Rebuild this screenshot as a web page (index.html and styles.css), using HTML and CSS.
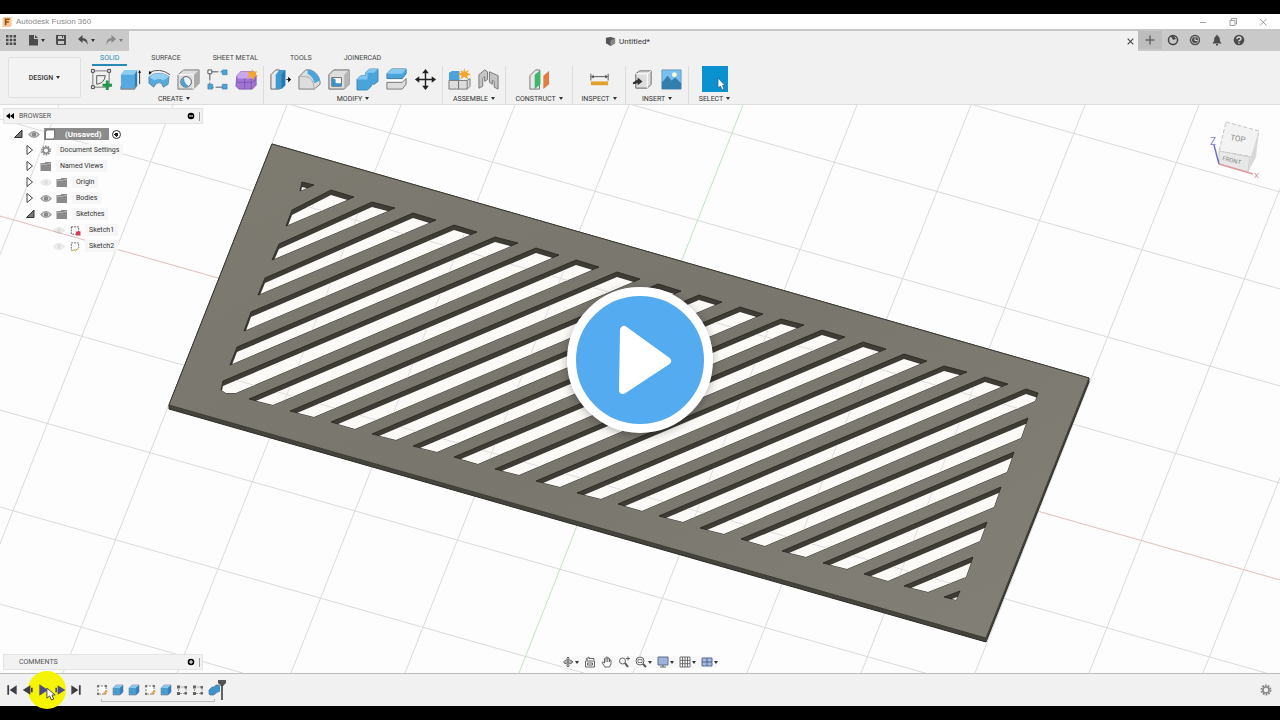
FILE: index.html
```html
<!DOCTYPE html>
<html lang="en">
<head>
<meta charset="utf-8">
<title>Autodesk Fusion 360</title>
<link rel="stylesheet" href="styles.css">
</head>
<body>
<svg class="sprite" aria-hidden="true">
  <defs>
    <symbol id="eye" viewBox="0 0 12 10"><path d="M1 5Q6-1 11 5Q6 11 1 5Z" fill="#ddd" stroke="#999" stroke-width="1.2"/><circle cx="6" cy="5" r="2.2" fill="#888"/></symbol>
    <symbol id="folder" viewBox="0 0 12 10"><path d="M.5 9.500V1.500H4.500L5.500 .5H11V9.500Z" fill="#8b8b8b"/><path d="M.5 3H7L8 2H11" fill="none" stroke="#c4c4c4" stroke-width=".7"/></symbol>
    <symbol id="closed" viewBox="0 0 10 10"><path d="M2 .5V9.500L7.500 5Z" fill="#fff" stroke="#444"/></symbol>
    <symbol id="open" viewBox="0 0 10 10"><path d="M9 1V8.500H1.500Z" fill="#777" stroke="#333"/></symbol>
    <symbol id="gear" viewBox="0 0 12 12"><circle cx="6" cy="6" r="4.500" fill="none" stroke="#888" stroke-width="2" stroke-dasharray="1.700 1.100"/><circle cx="6" cy="6" r="3" fill="none" stroke="#888" stroke-width="1.600"/></symbol>
    <symbol id="tsketch" viewBox="0 0 12 12"><path d="M2 2H10V10H2Z" fill="#fff" stroke="#666" stroke-width=".8" stroke-dasharray="2 1"/><path d="M1 1h2v2h-2zM9 1h2v2h-2zM1 9h2v2h-2z" fill="#777"/><path d="M7.500 10.500L11 6.500" stroke="#eda445" stroke-width="2"/></symbol>
    <symbol id="textrude" viewBox="0 0 12 12"><path d="M1 4L4 1H11V8L8 11H1Z" fill="#4a9ad4" stroke="#838d95" stroke-width=".7"/><path d="M1 4L4 1H11L8 4Z" fill="#8bc7ef"/><path d="M8 4L11 1V8L8 11Z" fill="#3a82b6"/></symbol>
    <symbol id="tpattern" viewBox="0 0 12 12"><path d="M2.500 3H10V9.500H2.500Z" fill="none" stroke="#777" stroke-width=".7" stroke-dasharray="2 1"/><path d="M1 1.500h3v3h-3zM8.500 2h2.500v2.500h-2.500zM1 8h3v3h-3zM8.500 8h2.500v2.500h-2.500z" fill="#666"/></symbol>
  </defs>
</svg>
<div class="app">
  <header class="titlebar">
    <svg class="logo" viewBox="0 0 10 11"><path d="M0 1L2 0H10V10L8 11H0Z" fill="#f6c89a"/><path d="M3.500 9V2.500H8M3.500 5.500H7" fill="none" stroke="#994c12" stroke-width="1.800"/></svg>
    <span class="app-name">Autodesk Fusion 360</span>
    <div class="window-buttons">
      <button aria-label="Minimize"><svg viewBox="0 0 10 10"><path d="M2 5.500H8"/></svg></button>
      <button aria-label="Restore"><svg viewBox="0 0 10 10"><path d="M2 3.500H7V8.500H2ZM3.500 3V1.500H8.500V7H7.500"/></svg></button>
      <button aria-label="Close window"><svg viewBox="0 0 10 10"><path d="M2 2L8.500 8.500M8.500 2L2 8.500"/></svg></button>
    </div>
  </header>

  <div class="tabstrip">
    <div class="quick">
      <button aria-label="Data panel"><svg viewBox="0 0 12 12"><path d="M1 1h2.500v2.500H1zM4.700 1h2.500v2.500H4.700zM8.400 1H11v2.500H8.400zM1 4.700h2.500v2.500H1zM4.700 4.700h2.500v2.500H4.700zM8.400 4.700H11v2.500H8.400zM1 8.400h2.500V11H1zM4.700 8.400h2.500V11H4.700zM8.400 8.400H11V11H8.400z"/></svg></button>
      <button aria-label="File"><svg viewBox="0 0 12 12"><path d="M2 1H7V5H11V11.500H2ZM8 1L11 4H8Z"/></svg><i class="caret"></i></button>
      <button aria-label="Save"><svg viewBox="0 0 12 12"><path fill-rule="evenodd" d="M1 1H11V11H2L1 10ZM3 2V5H9V2ZM3 7V10H9V7ZM7 2H8V4H7Z"/></svg></button>
      <button aria-label="Undo"><svg viewBox="0 0 12 12"><path d="M1 5L5.500 1V4Q11 4 10.500 11Q9 6.500 5.500 6.500V9Z"/></svg><i class="caret"></i></button>
      <button class="faded" aria-label="Redo"><svg viewBox="0 0 12 12"><path d="M11 5L6.500 1V4Q1 4 1.500 11Q3 6.500 6.500 6.500V9Z"/></svg><i class="caret"></i></button>
    </div>
    <div class="doc-tab">
      <span class="doc-name"><svg viewBox="0 0 12 12"><path d="M1 2L6 1L11 2.500V8L6 11L1 8Z" fill="#555"/><path d="M6 5L11 2.500V8L6 11Z" fill="#888"/></svg>Untitled*</span>
      <button class="close-doc" aria-label="Close document"><svg viewBox="0 0 8 8"><path d="M1.500 1.500L6.500 6.500M6.500 1.500L1.500 6.500"/></svg></button>
    </div>
    <div class="tools-right">
      <button class="plus" aria-label="New design"><svg viewBox="0 0 12 12"><path d="M6 1.500V10.500M1.500 6H10.500" stroke="#666" stroke-width="1.500"/></svg></button>
      <button aria-label="Extensions"><svg viewBox="0 0 12 12"><circle cx="6" cy="6" r="4.500" fill="none" stroke="#444" stroke-width="1.500"/><path d="M3 2H7L9 5L6 6L5 4Z"/></svg></button>
      <button aria-label="Job status"><svg viewBox="0 0 12 12"><circle cx="6" cy="6" r="5.200"/><circle cx="6" cy="6" r="3.600" fill="none" stroke="#ccc" stroke-width=".8"/><path d="M6 3.500V6.500H8.500" fill="none" stroke="#ddd"/></svg></button>
      <button aria-label="Notifications"><svg viewBox="0 0 12 12"><path d="M6 .5L7 2Q9 3 9 7L10.500 9.500H1.500L3 7Q3 3 5 2ZM5 10H7V11.500H5Z"/></svg></button>
      <button aria-label="Help"><svg viewBox="0 0 12 12"><circle cx="6" cy="6" r="5.300"/><path d="M4 5Q4 3 6 3T8 5Q8 6 6 6.700V7.500M6 8.500V9.700" fill="none" stroke="#ddd" stroke-width="1.300"/></svg></button>
    </div>
  </div>

  <div class="ribbon">
    <button class="workspace">DESIGN<i class="caret"></i></button>
    <div class="ribbon-main">
      <nav class="ribbon-tabs">
        <a href="#solid" class="active">SOLID</a><a href="#surface">SURFACE</a><a href="#sheet">SHEET METAL</a><a href="#tools">TOOLS</a><a href="#joinercad">JOINERCAD</a>
      </nav>
      <div class="groups">
        <section class="group">
          <div class="icons">
            <button aria-label="Create sketch"><svg viewBox="0 0 24 24"><path d="M3 3H20V20H3Z" fill="none" stroke="#555" stroke-width=".8"/><path d="M1.500 1.500h3v3h-3zM18.500 1.500h3v3h-3zM1.500 18.500h3v3h-3z" fill="#eee" stroke="#444"/><path d="M7 17V8H16Q15 16 7 17Z" fill="none" stroke="#555"/><path d="M18 13V23M13 18H23" stroke="#23974c" stroke-width="3"/></svg></button>
            <button aria-label="Extrude"><svg viewBox="0 0 24 24"><path d="M2 7L6 2H19L16 6V22H2Z" fill="#55a9de"/><path d="M2 7L6 2H19L16 7Z" fill="#8dccf1"/><path d="M16 7L19 2V18L16 22Z" fill="#2d7eb6"/><path d="M2 19V22H16L19 18" fill="none" stroke="#888" stroke-width="1.200"/><path d="M21.500 17V4" stroke="#333"/><path d="M20 5L21.500 2L23 5Z"/></svg></button>
            <button aria-label="Revolve"><svg viewBox="0 0 24 24"><path d="M1 9Q11 2 22 9L21 17L16 20L14 16Q11 14 8 17L6 20L1 16Z" fill="#55a9de" stroke="#5a7c92" stroke-width=".8"/><path d="M1 9Q11 2 22 9L16 13Q11 10 7 13Z" fill="#93cff2"/><path d="M1 5Q12-1 23 7" fill="none" stroke="#555"/><path d="M1 3V7L4 5Z"/></svg></button>
            <button aria-label="Hole"><svg viewBox="0 0 24 24"><path d="M1 7L7 2H23V16L17 22H1Z" fill="#ddd" stroke="#777"/><path d="M17 8L23 2V16L17 22Z" fill="#aaa"/><path d="M1 7H17V22" fill="none" stroke="#fff"/><circle cx="9.500" cy="14.500" r="5.500" fill="#eef8ff" stroke="#555"/><path d="M5 12A5.500 5.500 0 0 0 13 19Q8 18 7 10Z" fill="#4b9fd6"/></svg></button>
            <button aria-label="Rectangular pattern"><svg viewBox="0 0 24 24"><path d="M4 4H20M4 4V20H20" fill="none" stroke="#555" stroke-dasharray="9 2"/><path d="M2 2h4v4H2z" fill="#fff" stroke="#555"/><path d="M17 2h5v5h-5zM2 17h5v5H2zM17 17h5v5h-5z" fill="#47a4dc" stroke="#417fa7" stroke-width=".7"/></svg></button>
            <button aria-label="Create form"><svg viewBox="0 0 24 24"><path d="M2 8L6 4H20L22 8V18L18 22H4L1 19Z" fill="#a174d2" stroke="#8358b4"/><path d="M2 8L6 4H20L21 7L17 11H3Z" fill="#c8a8eb"/><path d="M10 11V22M17 11V22M2 15H18L22 12" fill="none" stroke="#7c53ab" stroke-width=".8"/><path d="M18 1L19.200 4.500L23 3L21.500 6.500L24 8L20.500 9L19 12.500L17 9.500L13 10L15 7L13 4L16.500 4.500Z" fill="#f3a72f"/></svg></button>
          </div><button class="group-label">CREATE<i class="caret"></i></button>
        </section>
        <section class="group">
          <div class="icons">
            <button aria-label="Press pull"><svg viewBox="0 0 24 24"><path d="M2 7L7 2H11V22H2Z" fill="#e8e8e8" stroke="#666"/><path d="M7 7L11 2H17V18L13 22H7Z" fill="#3e99d3"/><path d="M13 7L17 2V18L13 22Z" fill="#2878ad"/><path d="M18 12H22" stroke="#333"/><path d="M20 9L23 12L20 15Z"/></svg></button>
            <button aria-label="Fillet"><svg viewBox="0 0 24 24"><path d="M1 9L8 2H13Q21 5 23 14V17L17 22H1Z" fill="#ddd" stroke="#777"/><path d="M10 2H13Q21 5 23 13L17 16Q16 9 10 6Z" fill="#4ba5dd"/><path d="M1 9H8Q16 9 17 22" fill="none" stroke="#aaa"/></svg></button>
            <button aria-label="Shell"><svg viewBox="0 0 24 24"><path d="M2 7L7 2H23V17L18 22H2Z" fill="#ddd" stroke="#666"/><path d="M18 7L23 2V17L18 22Z" fill="#b5b5b5"/><path d="M5 10H15V19H5Z" fill="#fff" stroke="#666"/><path d="M5 10L9 12V16H15V19H5Z" fill="#3a92c9"/></svg></button>
            <button aria-label="Combine"><svg viewBox="0 0 24 24"><path d="M1 12L5 8H10V5L14 1H23V14L19 17H16V19L12 23H1Z" fill="#4aa4dc" stroke="#397da9" stroke-width=".8"/><path d="M1 12L5 8H10V5L14 1H23L19 5H12V12Z" fill="#82c6ef"/></svg></button>
            <button aria-label="Split body"><svg viewBox="0 0 24 24"><path d="M2 6L7 1H22V6L18 11H2Z" fill="#4ba5dd" stroke="#407d9f"/><path d="M2 6L7 1H22L18 6Z" fill="#86c9f0"/><path d="M2 15H18L22 11V17L18 22H2Z" fill="#ddd" stroke="#777"/><path d="M2 13H18L22 9" fill="none" stroke="#fff"/></svg></button>
            <button aria-label="Move"><svg viewBox="0 0 24 24"><path d="M12 3V21M3 12H21" stroke="#222" stroke-width="1.500"/><path d="M12 1L15.500 5.500H8.500ZM12 23L8.500 18.500H15.500ZM1 12L5.500 8.500V15.500ZM23 12L18.500 8.500V15.500Z" fill="#222"/></svg></button>
          </div><button class="group-label">MODIFY<i class="caret"></i></button>
        </section>
        <section class="group">
          <div class="icons">
            <button aria-label="New component"><svg viewBox="0 0 24 24"><path d="M1 5L4 3H12V13H1Z" fill="#4aa3da"/><path d="M1 13H11V22H1ZM11 13H20V22H11ZM20 13L23 11V19L20 22" fill="#ddd" stroke="#777"/><path d="M17 0L18 4L22 2L20 5L24 7L20 8L21 12L17 9L13 12L14 8L10 6L14 5L13 2L16 4Z" fill="#f2a72c"/></svg></button>
            <button aria-label="Joint"><svg viewBox="0 0 24 24"><path d="M2 7L8 2L11 4V12L8 14V9L6 11V19L2 21ZM13 4L22 8V22L18 20V14L16 13V17L13 15Z" fill="#c4c4c4" stroke="#777"/></svg></button>
          </div><button class="group-label">ASSEMBLE<i class="caret"></i></button>
        </section>
        <section class="group construct">
          <div class="icons"><button aria-label="Construction plane"><svg viewBox="0 0 24 24"><path d="M2 8L8 2H12V22H2Z" fill="#e8e8e8" stroke="#777"/><path d="M7 7L13 2V17L7 22Z" fill="#3db76c"/><path d="M16 8L22 3V17L16 22Z" fill="#e37b42"/></svg></button></div>
          <button class="group-label">CONSTRUCT<i class="caret"></i></button>
        </section>
        <section class="group inspect">
          <div class="icons"><button aria-label="Measure"><svg viewBox="0 0 24 24"><path d="M3 6V13M21 6V13M4 9H20" stroke="#555"/><path d="M3 9L6 7V11ZM21 9L18 7V11Z" fill="#555"/><path d="M3 14H21V18H3Z" fill="#e2a12d"/></svg></button></div>
          <button class="group-label">INSPECT<i class="caret"></i></button>
        </section>
        <section class="group">
          <div class="icons">
            <button aria-label="Insert derive"><svg viewBox="0 0 24 24"><path d="M5 6L9 3H21V17L17 21H5Z" fill="#ddd" stroke="#666"/><path d="M5 6H17V21M17 6L21 3" fill="none" stroke="#fff"/><path d="M2 15L7 12V10L12 14L7 18V16L2 17Z" fill="#333"/></svg></button>
            <button aria-label="Insert image"><svg viewBox="0 0 24 24"><path d="M2 2H22V22H2Z" fill="#77bff0" stroke="#719cb5"/><path d="M2 15L8 8L12 13L16 10L22 16V22H2Z" fill="#347eae"/><circle cx="15" cy="7" r="2.500" fill="#ffffd8"/></svg></button>
          </div><button class="group-label">INSERT<i class="caret"></i></button>
        </section>
        <section class="group select">
          <div class="icons"><button class="selected" aria-label="Select"><svg viewBox="0 0 26 26"><path d="M16 12V22L18.500 20L20 24L22 23L20.500 19.500H23Z" fill="#fff" stroke="#25607f" stroke-width=".7"/></svg></button></div>
          <button class="group-label">SELECT<i class="caret"></i></button>
        </section>
      </div>
    </div>
  </div>

  <main class="viewport">
    <svg class="scene" viewBox="0 105 1280 568" preserveAspectRatio="xMidYMid slice">
      <defs>
        <path id="slots" d="M302 182L314 185L300 191ZM331 190L354 197L286 226L292 210ZM372 202L395 208L272 260L279 244ZM413 213L436 220L258 295L265 278ZM454 225L477 232L244 331L251 312ZM495 237L518 243L230 365L237 347ZM536 248L559 255L236 393L226 393L221 390L223 381ZM576 260L599 267L273 405L249 399ZM617 272L640 279L314 417L290 411ZM658 284L681 291L355 429L331 422ZM699 295L722 302L396 440L372 434ZM740 307L763 314L437 452L413 446ZM781 319L804 325L478 464L454 457ZM822 330L845 337L519 475L495 469ZM863 342L886 349L560 487L536 481ZM904 354L927 361L601 499L577 493ZM944 366L967 372L642 511L618 504ZM985 377L1008 384L683 522L659 516ZM1026 389L1038 393L1035 401L724 534L700 528ZM1028 418L1021 438L765 546L741 539ZM1014 452L1007 472L806 557L782 551ZM1001 487L994 507L847 569L823 563ZM987 522L980 541L888 581L864 574ZM973 557L966 577L928 592L904 586ZM960 591L956 600L944 597Z"/>
        <clipPath id="slot-clip"><use href="#slots"/></clipPath>
        <clipPath id="floor-clip"><use href="#slots" y="5"/></clipPath>
        <path id="shallow" d="M0 -172L1280 192M0 -75L1280 289M0 22L1280 386M0 119L1280 483M0 313L1280 677M0 410L1280 774M0 507L1280 871M0 604L1280 968"/>
        <path id="steep" d="M59 105L-165 673M173 105L-51 673M287 105L63 673M401 105L177 673M515 105L291 673M629 105L405 673M857 105L633 673M971 105L747 673M1085 105L861 673M1199 105L975 673M1313 105L1089 673M1427 105L1203 673"/>
        <linearGradient id="metal" x1="0" y1="0" x2="1" y2="1"><stop offset="0" stop-color="#7e7b71"/><stop offset=".5" stop-color="#78766d"/><stop offset="1" stop-color="#838077"/></linearGradient>
      </defs>
      <path d="M0 105H1280V673H0Z" fill="#fdfdfd"/>
      <g fill="none">
        <use href="#shallow" stroke="#dadada"/><use href="#steep" stroke="#dadada"/>
        <path d="M0 216L1280 580" stroke="#e0bfb9"/><path d="M743 105L519 673" stroke="#bce8bf"/>
      </g>
      <path d="M272 144L1089 378V382L986 642L169 409V405Z" fill="#45443c" stroke="#2b2a25"/>
      <path d="M272 144L1089 378L986 638L169 405Z" fill="url(#metal)" stroke="#37362f" stroke-width=".8"/>
      <use href="#slots" fill="#3e3c34" stroke="#25241f" stroke-width=".8"/>
      <g clip-path="url(#slot-clip)"><g clip-path="url(#floor-clip)">
        <path d="M200 150H1060V620H200Z" fill="#fbfaf7"/>
        <use href="#shallow" stroke="#dedede"/><use href="#steep" stroke="#dedede"/>
      </g></g>
      <path d="M1226 122L1259 131L1253 157L1219 151Z" fill="#f3f3f3" stroke="#c4c4c4" stroke-dasharray="4 2"/>
      <path d="M1219 151L1250 157L1248 172L1219 164Z" fill="#e8e8e8" stroke="#ccc"/>
      <path d="M1259 131L1256 157L1248 172L1251 156Z" fill="#d8d8d8"/>
      <path d="M1214 145L1219 164" stroke="#7070d2" stroke-width="1.500"/><path d="M1219 164L1253 174" stroke="#dd9c9c" stroke-width="1.500"/>
      <text class="cube-top" x="1230" y="140" transform="rotate(10 1230 140)">TOP</text>
      <text class="cube-front" x="1222" y="160" transform="rotate(14 1222 160)">FRONT</text>
      <text class="axis-z" x="1210" y="145">Z</text><text class="axis-x" x="1254" y="178">X</text>
    </svg>

    <aside class="browser">
      <div class="panel-head"><button aria-label="Collapse browser"><svg viewBox="0 0 8 8"><path d="M4 1V7L0 4ZM8 1V7L4 4Z"/></svg></button><h2>BROWSER</h2><button aria-label="Hide browser"><svg viewBox="0 0 8 8"><circle cx="4" cy="4" r="3.300"/><path d="M2 4H6" stroke="#fff"/></svg></button><span class="grip"></span></div>
      <ul class="tree">
        <li class="root"><svg class="arrow"><use href="#open"/></svg><svg class="ico"><use href="#eye"/></svg><span class="root-name"><svg class="ico" viewBox="0 0 12 12"><path d="M1 3L3 1H11V9L9 11H1Z" fill="#fff" stroke="#666"/></svg>(Unsaved)</span><input type="radio" checked aria-label="Activate component"></li>
        <li class="l1"><svg class="arrow"><use href="#closed"/></svg><svg class="ico"><use href="#gear"/></svg><span>Document Settings</span></li>
        <li class="l1"><svg class="arrow"><use href="#closed"/></svg><svg class="ico"><use href="#folder"/></svg><span>Named Views</span></li>
        <li class="l1"><svg class="arrow"><use href="#closed"/></svg><svg class="ico dim"><use href="#eye"/></svg><svg class="ico"><use href="#folder"/></svg><span>Origin</span></li>
        <li class="l1"><svg class="arrow"><use href="#closed"/></svg><svg class="ico"><use href="#eye"/></svg><svg class="ico"><use href="#folder"/></svg><span>Bodies</span></li>
        <li class="l1"><svg class="arrow"><use href="#open"/></svg><svg class="ico"><use href="#eye"/></svg><svg class="ico"><use href="#folder"/></svg><span>Sketches</span></li>
        <li class="l2"><svg class="ico dim"><use href="#eye"/></svg><svg class="ico" viewBox="0 0 12 12"><path d="M2 2H10V10H2Z" fill="#fff" stroke="#555" stroke-dasharray="2 1"/><path d="M7 7H12V11.500H7Z" fill="#d63b57"/></svg><span>Sketch1</span></li>
        <li class="l2"><svg class="ico dim"><use href="#eye"/></svg><svg class="ico" viewBox="0 0 12 12"><path d="M2 2H10V7L7 10H2Z" fill="#fff" stroke="#666" stroke-dasharray="2 1"/><path d="M2 10.500H7L10.500 7" fill="none" stroke="#d9ba52"/></svg><span>Sketch2</span></li>
      </ul>
    </aside>

    <div class="bottom">
      <div class="panel-head comments"><h2>COMMENTS</h2><button aria-label="Show comments"><svg viewBox="0 0 8 8"><circle cx="4" cy="4" r="3.300"/><path d="M2 4H6M4 2V6" stroke="#fff"/></svg></button><span class="grip"></span></div>
      <div class="navbar">
        <button aria-label="Orbit"><svg viewBox="0 0 12 12"><path d="M6 1V11M1 6H11M4.500 2.500L6 1L7.500 2.500M4.500 9.500L6 11L7.500 9.500M2.500 4.500Q6 3 9.500 4.500Q12 6 9 7.500Q5 9 2 7"/></svg><i class="caret"></i></button>
        <button aria-label="Look at"><svg viewBox="0 0 12 12"><path d="M1.500 5H10.500V11H1.500ZM3.500 7H8.500V9H3.500ZM2 3L5 1V2.500H10V4M2 3L4 4"/></svg></button>
        <button aria-label="Pan"><svg viewBox="0 0 12 12"><path d="M4 11L1 6.500Q1.500 5 3.500 7V2.500Q4.500 1 5 2.500V1.500Q6 0 6.800 1.500V2.500Q8 1 8.500 3V4Q10 3 10 5V8L8.500 11ZM5 2.500V6M6.800 2V6M8.500 3V6" fill="#fff"/></svg></button>
        <button aria-label="Zoom"><svg viewBox="0 0 12 12"><circle cx="4.500" cy="5" r="3"/><path d="M7 7L10 11" stroke-width="2"/><path d="M8 2.500H12M10 .5V4.500"/></svg></button>
        <button aria-label="Fit"><svg viewBox="0 0 12 12"><circle cx="5" cy="5" r="4"/><path d="M3 3.500H7V6.500H3Z" stroke-width=".7"/><path d="M8 8L11 11" stroke-width="2"/></svg><i class="caret"></i></button>
        <button aria-label="Display settings"><svg viewBox="0 0 12 12"><path d="M1 1H11V9H1Z" fill="#9eb4df" stroke="#56647e"/><path d="M3 11H9M6 9V11"/></svg><i class="caret"></i></button>
        <button aria-label="Grid"><svg viewBox="0 0 12 12"><path d="M1 1H11V11H1ZM3.500 1V11M6 1V11M8.500 1V11M1 4.300H11M1 7.700H11" stroke-width=".8"/></svg><i class="caret"></i></button>
        <button aria-label="Viewports"><svg viewBox="0 0 12 12"><path d="M1 2H11V10H1ZM1 6H11M6 2V10" fill="#a9bbdf" stroke="#4a5f8a"/></svg><i class="caret"></i></button>
      </div>
    </div>
  </main>

  <footer class="timeline">
    <span class="highlight"></span>
    <div class="playback">
      <button aria-label="Go to start"><svg viewBox="0 0 12 12"><path d="M2 2H3.500V10H2ZM10 2V10L4 6Z"/></svg></button>
      <button aria-label="Step back"><svg viewBox="0 0 12 12"><path d="M8 2V10L1.500 6ZM8.500 4H10V8H8.500Z"/></svg></button>
      <button class="lit" aria-label="Play timeline"><svg viewBox="0 0 12 12"><path d="M2 1V11L9.500 6Z"/></svg></button>
      <button class="lit" aria-label="Step forward"><svg viewBox="0 0 12 12"><path d="M4 2V10L10.500 6ZM2 4H3.500V8H2Z"/></svg></button>
      <button aria-label="Go to end"><svg viewBox="0 0 12 12"><path d="M8.500 2H10V10H8.500ZM2 2V10L8 6Z"/></svg></button>
    </div>
    <svg class="pointer" viewBox="0 0 12 16"><path d="M1 1V12L4 9.500L6 14L8.500 13L6.500 8.500H10Z" fill="#fff" stroke="#444"/></svg>
    <div class="features">
      <button aria-label="Sketch 1"><svg><use href="#tsketch"/></svg></button><button aria-label="Extrude 1"><svg><use href="#textrude"/></svg></button><button aria-label="Extrude 2"><svg><use href="#textrude"/></svg></button><button aria-label="Sketch 2"><svg><use href="#tsketch"/></svg></button><button aria-label="Extrude 3"><svg><use href="#textrude"/></svg></button><button aria-label="Pattern 1"><svg><use href="#tpattern"/></svg></button><button aria-label="Pattern 2"><svg><use href="#tpattern"/></svg></button><button aria-label="Combine 1"><svg viewBox="0 0 12 12"><path d="M1 6L4 3H6L8 1H11L12 3V7L8 9L6 11H2L1 10Z" fill="#3d94d1" stroke="#51799a" stroke-width=".7"/></svg></button>
    </div>
    <svg class="marker" viewBox="0 0 10 22"><path d="M1 1H9V4L6 7H4L1 4Z" fill="#555"/><path d="M5 6V21" stroke="#333" stroke-width="1.500"/></svg>
    <button class="settings" aria-label="Timeline settings"><svg><use href="#gear"/></svg></button>
  </footer>
  <button class="play" aria-label="Play video"><svg viewBox="0 0 146 146"><circle cx="73" cy="73" r="68.500" fill="#54abef" stroke="#fff" stroke-width="9"/><path d="M57 43L56 103L100 74Z" fill="#fff" stroke="#fff" stroke-width="8" stroke-linejoin="round"/></svg></button>
</div>
</body>
</html>
```
FILE: styles.css
```css
* { box-sizing: border-box; }
body { margin: 0; background: #000; color: #333; font-family: Roboto, "Liberation Sans", sans-serif; font-size: 8px; }
button { display: flex; align-items: center; justify-content: center; padding: 0; border: 0; background: none; color: inherit; font: inherit; }
h2, ul { margin: 0; padding: 0; font-weight: 400; }
svg { display: block; flex: none; }
.sprite { position: absolute; width: 0; height: 0; }
.caret { border: 2px solid transparent; border-top: 3px solid #333; border-bottom: 0; margin-left: 3px; }

.app { position: relative; display: flex; flex-direction: column; height: 100vh; padding: 14px 0; overflow: hidden; }
.titlebar { display: flex; align-items: center; flex: none; height: 15px; padding: 0 2px; background: #fff; color: #8a8a8a; }
.logo { width: 10px; height: 10px; }
.app-name { margin-left: 4px; font-family: "Liberation Sans", Arial, sans-serif; }
.window-buttons { display: flex; gap: 20px; margin-left: auto; padding-right: 10px; }
.window-buttons svg { width: 10px; height: 10px; fill: none; stroke: #888; stroke-width: .8; }

.tabstrip { display: flex; flex: none; height: 22px; border-top: 2px solid #c6c6c6; background: #f1f1f1; }
.quick, .tools-right { display: flex; align-items: center; padding-bottom: 2px; background: #c9c9c9; }
.quick { width: 129px; padding-left: 5px; padding-right: 6px; justify-content: space-between; }
.quick svg, .tools-right svg { width: 12px; height: 12px; fill: #4c4c4c; }
.quick .caret { margin-left: 2px; }
.faded { opacity: .5; }
.doc-tab { display: flex; flex: 1; align-items: center; padding-right: 3px; }
.doc-name { display: flex; align-items: center; gap: 3px; margin: 0 auto; }
.doc-name svg { width: 11px; height: 11px; }
.close-doc svg { width: 9px; height: 9px; stroke: #444; }
.tools-right { width: 142px; gap: 10px; }
.plus { width: 24px; height: 18px; margin-right: -5px; background: #bdbdbd; }

.ribbon { display: flex; flex: none; height: 54px; padding-left: 8px; background: #f1f1f1; border-bottom: 1px solid #ddd; }
.workspace { width: 73px; height: 41px; margin-top: 6px; border: 1px solid #e0e0e0; border-radius: 2px; background: #f3f3f3; font-size: 7px; font-weight: 500; }
.ribbon-main { padding-left: 4px; }
.ribbon-tabs { display: flex; gap: 16px; height: 15px; padding-left: 7px; }
.ribbon-tabs a { height: 15px; padding: 0 8px; color: #444; font-size: 7px; line-height: 14px; text-decoration: none; }
.ribbon-tabs .active { border-bottom: 2px solid #278ab5; color: #278ab5; }
.groups { display: flex; }
.group { display: flex; flex-direction: column; align-items: center; padding: 0 2px; border-right: 1px solid #ddd; }
.group:last-child { border-right: 0; }
.construct { width: 67px; }
.inspect { width: 53px; }
.select { width: 51px; }
.icons { display: flex; height: 27px; }
.icons button { width: 29px; height: 26px; }
.icons svg { width: 23px; height: 23px; }
.icons .selected { width: 26px; background: #0b91cf; }
.icons .selected svg { width: 26px; height: 26px; }
.group-label { height: 11px; font-size: 7px; }
.group-label .caret { margin-left: 3px; }

.viewport { position: relative; display: flex; flex: 1; flex-direction: column; justify-content: space-between; min-height: 0; padding: 3px; background: #fdfdfd; }
.scene { position: absolute; inset: 0; width: 100%; height: 100%; }
.cube-top { font-size: 8px; fill: #888; }
.cube-front { font-size: 6px; fill: #888; }
.axis-z { font-size: 10px; fill: #8181dc; }
.axis-x { font-size: 8px; fill: #d98c8c; }
.browser, .bottom { position: relative; }
.panel-head { display: flex; align-items: center; width: 200px; height: 16px; padding: 0 1px 0 2px; background: #f2f2f2; border: 1px solid #e4e4e4; color: #555; }
.panel-head h2 { margin: 0 auto 0 5px; font-size: 7px; }
.panel-head svg { width: 8px; height: 8px; }
.comments h2 { margin-left: 13px; }
.grip { width: 2px; height: 9px; margin-left: 4px; border-left: 1px solid #999; }
.tree { padding-top: 2px; font-size: 7px; list-style: none; }
.tree li { display: flex; align-items: center; height: 16px; }
.arrow { width: 10px; height: 10px; margin-right: 5px; }
.ico { width: 12px; height: 11px; margin-right: 4px; }
.dim { opacity: .25; }
.root { padding-left: 10px; }
.l1 { padding-left: 22px; }
.l2 { padding-left: 50px; }
.tree li > span:not(.root-name) { padding: 2px 4px; background: #f6f6f6; }
.root-name { display: flex; align-items: center; width: 65px; height: 12px; background: #8c8c8c; color: #fff; font-size: 8px; font-weight: 700; }
.root-name .ico { margin-right: 9px; }
.tree input { appearance: none; width: 9px; height: 9px; margin: 0 3px; border: 1px solid #333; border-radius: 50%; background: radial-gradient(#222 0 2px, #fff 2px); }
.bottom { display: flex; align-items: center; }
.navbar { display: flex; align-items: center; gap: 5px; margin-left: 359px; background: #f8f8f8; }
.navbar svg { width: 12px; height: 12px; fill: none; stroke: #555; stroke-width: .9; }
.navbar .caret { margin-left: 1px; }

.timeline { position: relative; display: flex; flex: none; align-items: center; height: 33px; padding: 0 8px 0 5px; border-top: 1px solid #bbb; background: #f1f1f1; }
.highlight { position: absolute; left: 28px; top: -3px; width: 38px; height: 38px; border-radius: 50%; background: #f5f500; }
.playback { position: relative; display: flex; gap: 2px; }
.playback svg { width: 14px; height: 14px; fill: #3d3d46; }
.playback .lit svg { fill: #4d4a86; }
.pointer { position: absolute; left: 46px; top: 13px; width: 11px; height: 15px; }
.features { position: relative; display: flex; gap: 4px; margin-left: 13px; }
.features::after { position: absolute; left: 5px; right: 5px; top: 15px; height: 2px; border: 1px solid #bbb; border-top: 0; content: ""; }
.features svg { width: 12px; height: 12px; }
.marker { width: 10px; height: 22px; margin-left: -3px; z-index: 1; }
.settings { margin-left: auto; }
.settings svg { width: 12px; height: 12px; }

.play { position: absolute; left: 50%; top: 50%; width: 146px; height: 146px; border-radius: 50%; transform: translate(-50%, -50%); box-shadow: 0 2px 10px rgba(0, 0, 0, .3); }
.play svg { width: 146px; height: 146px; }
```
